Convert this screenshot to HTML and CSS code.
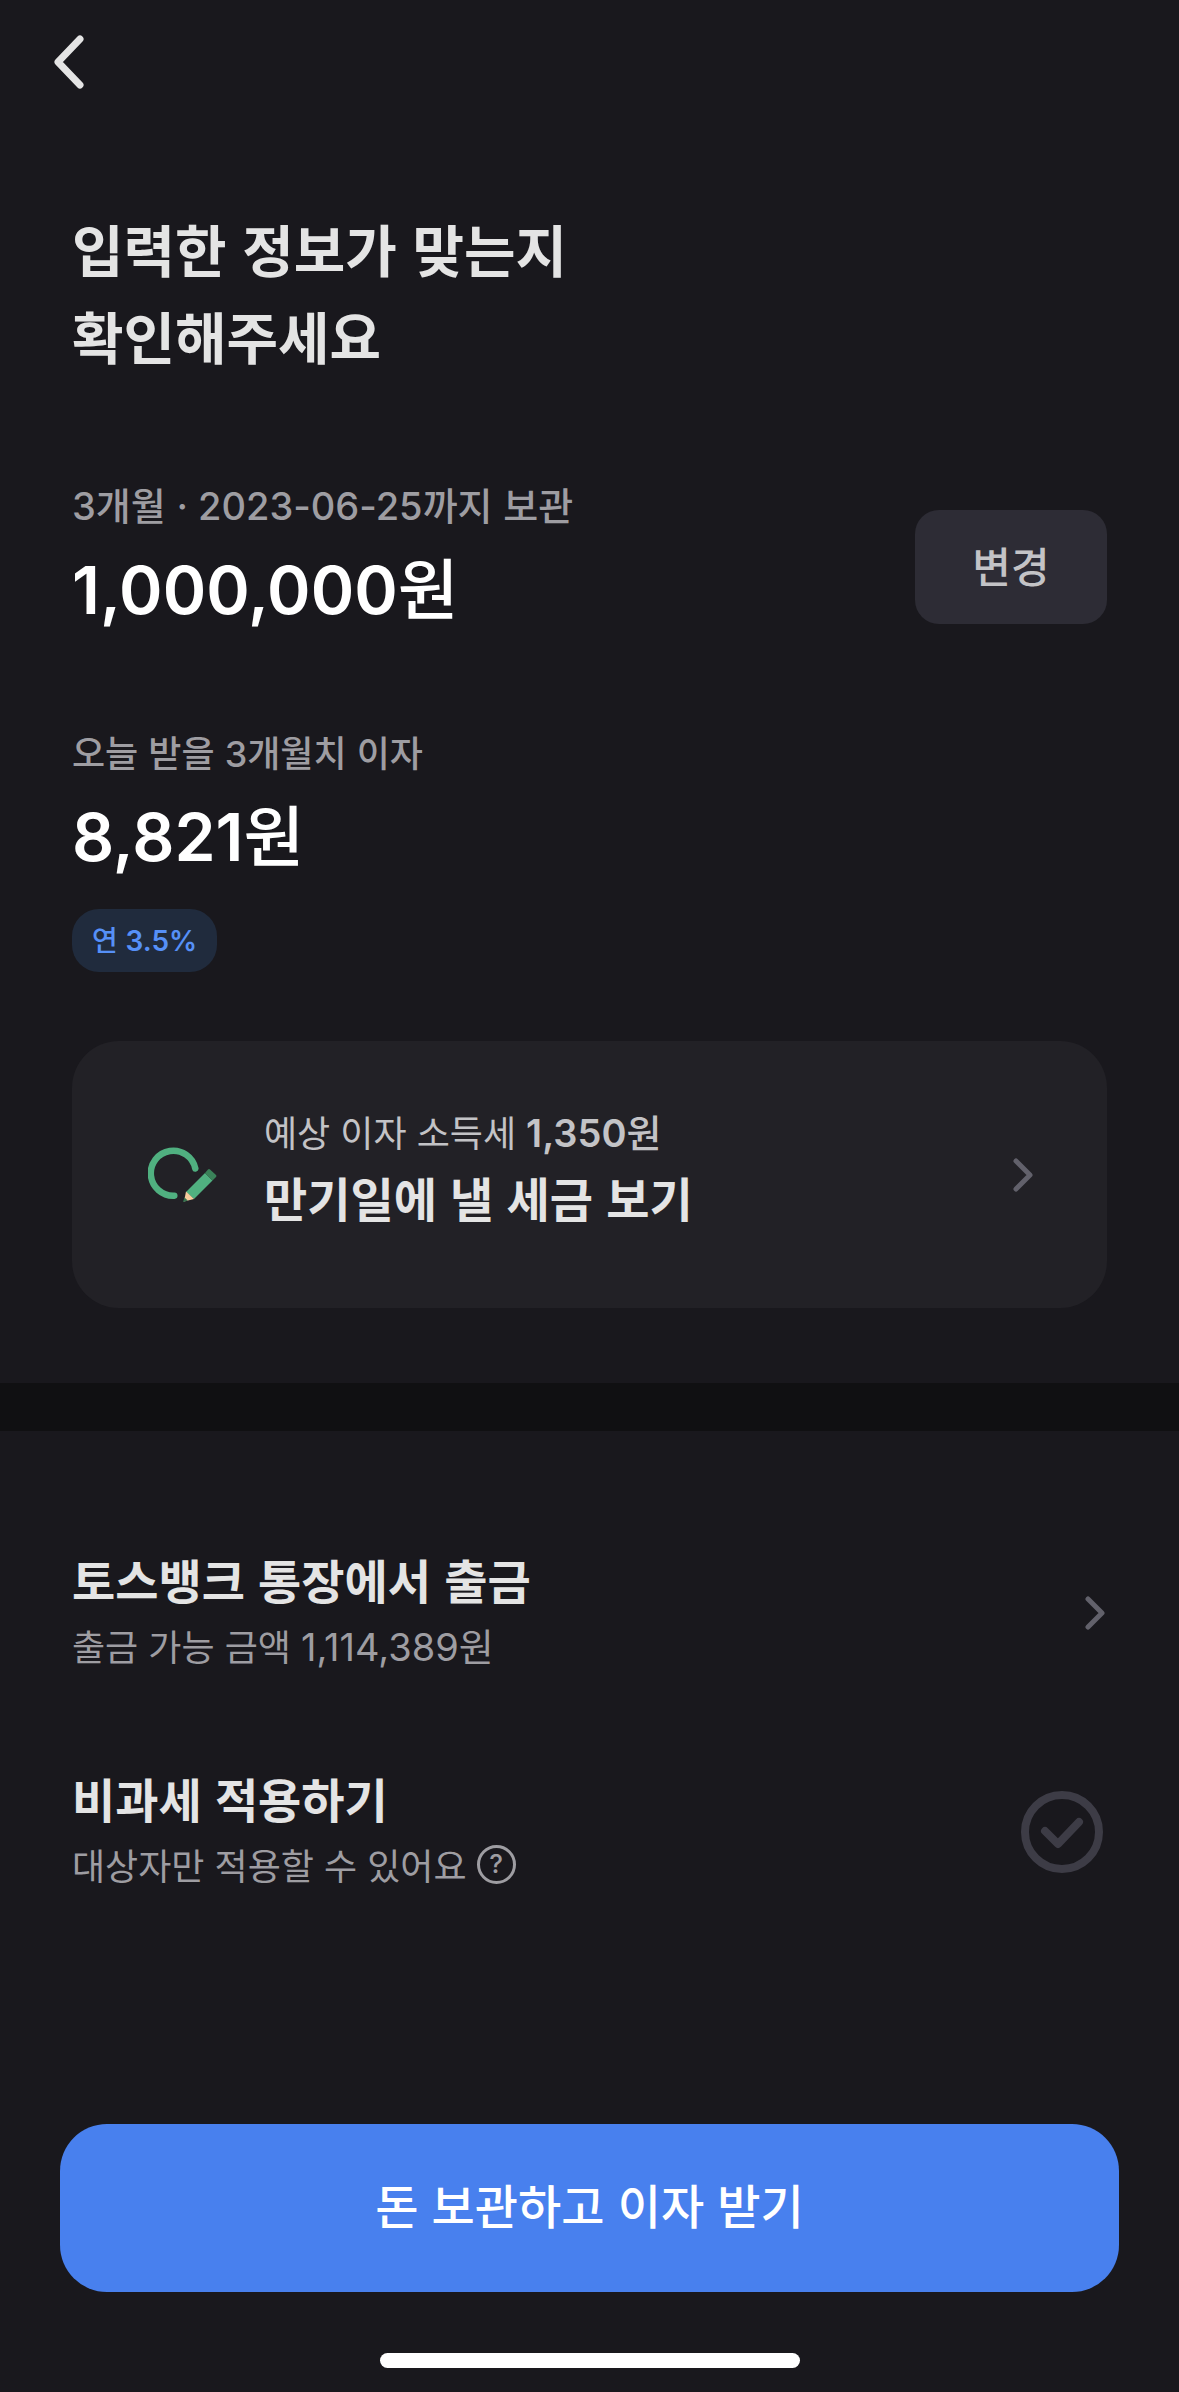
FILE: index.html
```html
<!DOCTYPE html>
<html lang="ko">
<head>
<meta charset="utf-8">
<meta name="viewport" content="width=device-width, initial-scale=1">
<title>입력한 정보 확인</title>
<link rel="stylesheet" href="styles.css">
</head>
<body>
<div class="app">
  <header class="topbar">
    <button class="back" type="button" aria-label="뒤로">
      <svg width="32" height="56" viewBox="0 0 32 56" fill="none" stroke="currentColor" stroke-width="7" stroke-linecap="round" stroke-linejoin="round"><path d="M27 5 5 28l22 23"/></svg>
    </button>
  </header>

  <main class="content">
    <section class="summary">
      <h1 class="title">입력한 정보가 맞는지<br>확인해주세요</h1>

      <div class="entry">
        <div class="entry-text">
          <p class="label"><span class="num">3</span>개월 <span class="num">· 2023-06-25</span>까지 보관</p>
          <p class="amount"><span class="num">1,000,000</span>원</p>
        </div>
        <button class="change" type="button">변경</button>
      </div>

      <div class="interest">
        <p class="label label-small">오늘 받을 <span class="num">3</span>개월치 이자</p>
        <p class="amount"><span class="num">8,821</span>원</p>
        <p class="badge">연 <span class="num">3.5%</span></p>
      </div>

      <a class="card" href="#tax">
        <svg class="card-icon" width="72" height="60" viewBox="0 0 72 60" fill="none">
          <path d="M47.300 23.500A22.500 22.500 0 1 0 26.300 50.700" stroke="#50b080" stroke-width="6.500" stroke-linecap="round"/>
          <path d="M38 47 57 28 64.500 35.500 46 54Z" fill="#50b080"/>
          <path d="M57 28 60 24.500Q61 23.600 62 24.500L68 30Q69 31 68 32L64.500 35.500Z" fill="#3a8259"/>
          <path d="M38 46.500 46 54 36 56.500Z" fill="#f9cc9d"/>
          <path d="M36.500 52.500 39.800 55.600 35.500 57Q35 57 35.100 56.500Z" fill="#34724f"/>
        </svg>
        <span class="card-text">
          <span class="card-sub">예상 이자 소득세 <b><span class="num">1,350</span>원</b></span>
          <span class="card-title">만기일에 낼 세금 보기</span>
        </span>
        <svg class="chevron" width="22" height="34" viewBox="0 0 22 34" fill="none" stroke="currentColor" stroke-width="5" stroke-linecap="round" stroke-linejoin="round"><path d="M3 3l14 14L3 31"/></svg>
      </a>
    </section>

    <section class="options">
      <a class="option" href="#account">
        <span class="option-text">
          <span class="option-title">토스뱅크 통장에서 출금</span>
          <span class="option-sub"><span>출금 가능 금액 <span class="balance"><span class="num">1,114,389</span>원</span></span></span>
        </span>
        <svg class="chevron" width="22" height="34" viewBox="0 0 22 34" fill="none" stroke="currentColor" stroke-width="5" stroke-linecap="round" stroke-linejoin="round"><path d="M3 3l14 14L3 31"/></svg>
      </a>
      <div class="option">
        <div class="option-text">
          <label class="option-title" for="tax-free">비과세 적용하기</label>
          <span class="option-sub">대상자만 적용할 수 있어요 <button class="help" type="button" aria-label="도움말">?</button></span>
        </div>
        <span class="check">
          <input id="tax-free" class="check-input" type="checkbox">
          <svg class="check-mark" width="82" height="82" viewBox="0 0 82 82" fill="none" stroke="currentColor" stroke-width="8" stroke-linecap="round" stroke-linejoin="round"><circle cx="41" cy="41" r="37"/><path d="M24 40l13 13 21-22"/></svg>
        </span>
      </div>
    </section>
  </main>

  <footer class="footer">
    <button class="cta" type="button">돈 보관하고 이자 받기</button>
    <div class="home-bar"></div>
  </footer>
</div>
</body>
</html>
```
FILE: styles.css
```css
* {
  box-sizing: border-box;
}

body {
  margin: 0;
  background: #19181d;
  color: #e4e4e4;
  font-family: "Noto Sans CJK KR", sans-serif;
}

h1,
p {
  margin: 0;
}

button {
  padding: 0;
  border: 0;
  background: none;
  color: inherit;
  font: inherit;
  cursor: pointer;
}

a {
  color: inherit;
  text-decoration: none;
}

svg {
  display: block;
  flex: none;
}

/* Latin numerals inside Korean text; the short line height keeps them from growing the line */
.num {
  font-family: Inter, "Noto Sans CJK KR", sans-serif;
  line-height: 1;
}

.app {
  display: flex;
  flex-direction: column;
  min-height: 100vh;
}

.topbar {
  display: flex;
  align-items: center;
  height: 124px;
  padding: 0 53px;
}

.content {
  flex: 1;
}

.summary {
  padding: 80px 72px 75px;
}

.title {
  font-size: 56px;
  font-weight: 700;
  line-height: 87px;
}

.entry {
  display: flex;
  align-items: center;
  justify-content: space-between;
  margin-top: 96px;
}

.entry-text {
  padding-bottom: 24px;
}

.interest {
  margin-top: 61px;
}

.label {
  color: #9e9da2;
  font-size: 38px;
  font-weight: 500;
  line-height: 60px;
}

.label-small {
  font-size: 36px;
}

.amount {
  color: #fff;
  font-size: 66px;
  font-weight: 500;
  line-height: 102px;
}

.amount .num {
  font-weight: 600;
}

.change {
  width: 192px;
  height: 114px;
  padding-bottom: 6px;
  border-radius: 24px;
  background: #2d2c35;
  color: #c3c3c6;
  font-size: 42px;
  font-weight: 500;
}

.badge {
  width: fit-content;
  margin-top: 26px;
  padding: 0 20px 3px;
  border-radius: 27px;
  background: #202b3d;
  color: #5690f7;
  font-size: 28px;
  font-weight: 500;
  line-height: 60px;
}

.badge .num {
  font-weight: 600;
}

.card {
  display: flex;
  align-items: center;
  margin-top: 69px;
  padding: 60px 72px 60px 76px;
  border-radius: 47px;
  background: #222126;
}

.card-text {
  display: flex;
  flex: 1;
  flex-direction: column;
  margin-left: 44px;
  padding-bottom: 15px;
}

.card-sub {
  color: #c3c3c6;
  font-size: 36px;
  line-height: 60px;
}

.card-sub b {
  font-size: 38px;
  font-weight: 500;
  line-height: 1;
}

.card-sub .num {
  font-weight: 600;
}

.card-title,
.option-title {
  font-size: 47px;
  font-weight: 700;
  line-height: 72px;
}

.chevron {
  color: #62616b;
}

.options {
  display: flex;
  flex-direction: column;
  gap: 79px;
  padding: 112px 72px;
  border-top: 48px solid #101012;
}

.option {
  display: flex;
  align-items: center;
  justify-content: space-between;
}

.option-text {
  display: flex;
  flex-direction: column;
  padding-bottom: 8px;
}

.option-sub {
  display: flex;
  align-items: center;
  gap: 10px;
  color: #9e9da2;
  font-size: 36px;
  line-height: 60px;
}

.balance {
  font-size: 38px;
  line-height: 1;
}

.help {
  width: 39px;
  height: 39px;
  border: 3px solid #9e9da2;
  border-radius: 50%;
  font-family: Inter, sans-serif;
  font-size: 26px;
  font-weight: 500;
  line-height: 32px;
}

.check {
  display: grid;
  margin-right: 4px;
  color: #3d3c46;
}

.check-input,
.check-mark {
  grid-area: 1 / 1;
}

.check-input {
  width: 100%;
  height: 100%;
  margin: 0;
  appearance: none;
  cursor: pointer;
}

.check-mark {
  pointer-events: none;
}

.check-input:checked + .check-mark {
  color: #4880ee;
}

.footer {
  display: flex;
  flex-direction: column;
  align-items: center;
  gap: 61px;
  padding: 0 60px 24px;
}

.cta {
  width: 100%;
  height: 168px;
  padding-bottom: 9px;
  border-radius: 47px;
  background: #4880ee;
  color: #fff;
  font-size: 47px;
  font-weight: 500;
}

.home-bar {
  width: 420px;
  max-width: 100%;
  height: 15px;
  border-radius: 8px;
  background: #fff;
}
```
